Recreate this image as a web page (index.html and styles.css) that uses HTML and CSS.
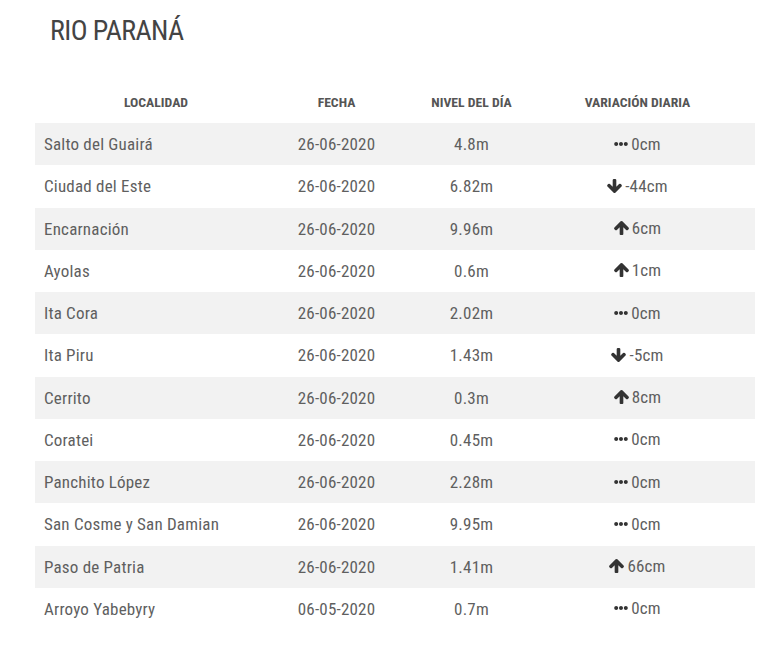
FILE: index.html
```html
<!DOCTYPE html>
<html lang="es">
<head>
<meta charset="utf-8">
<title>Rio Paraná</title>
<link rel="stylesheet" href="styles.css">
</head>
<body>
<svg width="0" height="0" class="defs">
  <defs>
    <symbol id="up" viewBox="53 192 1558 1472"><path d="M1611 971q0 51-37 90l-75 75q-38 38-91 38-54 0-90-38l-294-293v704q0 52-37.5 84.5t-90.5 32.5h-128q-53 0-90.5-32.5t-37.5-84.5v-704l-294 293q-36 38-90 38t-90-38l-75-75q-38-38-38-90 0-53 38-91l651-651q35-37 90-37 54 0 91 37l651 651q37 39 37 91z"/></symbol>
    <symbol id="down" viewBox="53 128 1558 1483"><path d="M1611 832q0 53-37 90l-651 652q-39 37-91 37-53 0-90-37l-651-652q-38-36-38-90 0-53 38-91l74-75q39-37 91-37 53 0 90 37l294 294v-704q0-52 38-90t90-38h128q52 0 90 38t38 90v704l294-294q37-37 90-37 52 0 91 37l75 75q37 39 37 91z"/></symbol>
    <symbol id="dots" viewBox="0 0 512 512"><path d="M328 256c0 39.8-32.2 72-72 72s-72-32.2-72-72 32.2-72 72-72 72 32.2 72 72zm104-72c-39.8 0-72 32.2-72 72s32.2 72 72 72 72-32.2 72-72-32.2-72-72-72zm-352 0c-39.8 0-72 32.2-72 72s32.2 72 72 72 72-32.2 72-72-32.2-72-72-72z"/></symbol>
  </defs>
</svg>
<main class="page">
  <h1 class="title">RIO PARANÁ</h1>
  <table class="levels">
    <colgroup>
      <col class="c-loc"><col class="c-date"><col class="c-level"><col class="c-var"><col class="c-pad">
    </colgroup>
    <thead>
      <tr><th>LOCALIDAD</th><th>FECHA</th><th>NIVEL DEL DÍA</th><th>VARIACIÓN DIARIA</th><th></th></tr>
    </thead>
    <tbody>
      <tr><td class="loc">Salto del Guairá</td><td>26-06-2020</td><td>4.8m</td><td><span class="var"><svg class="ico dots"><use href="#dots"/></svg>0cm</span></td><td></td></tr>
      <tr><td class="loc">Ciudad del Este</td><td>26-06-2020</td><td>6.82m</td><td><span class="var"><svg class="ico arrow"><use href="#down"/></svg>-44cm</span></td><td></td></tr>
      <tr><td class="loc">Encarnación</td><td>26-06-2020</td><td>9.96m</td><td><span class="var"><svg class="ico arrow"><use href="#up"/></svg>6cm</span></td><td></td></tr>
      <tr><td class="loc">Ayolas</td><td>26-06-2020</td><td>0.6m</td><td><span class="var"><svg class="ico arrow"><use href="#up"/></svg>1cm</span></td><td></td></tr>
      <tr><td class="loc">Ita Cora</td><td>26-06-2020</td><td>2.02m</td><td><span class="var"><svg class="ico dots"><use href="#dots"/></svg>0cm</span></td><td></td></tr>
      <tr><td class="loc">Ita Piru</td><td>26-06-2020</td><td>1.43m</td><td><span class="var"><svg class="ico arrow"><use href="#down"/></svg>-5cm</span></td><td></td></tr>
      <tr><td class="loc">Cerrito</td><td>26-06-2020</td><td>0.3m</td><td><span class="var"><svg class="ico arrow"><use href="#up"/></svg>8cm</span></td><td></td></tr>
      <tr><td class="loc">Coratei</td><td>26-06-2020</td><td>0.45m</td><td><span class="var"><svg class="ico dots"><use href="#dots"/></svg>0cm</span></td><td></td></tr>
      <tr><td class="loc">Panchito López</td><td>26-06-2020</td><td>2.28m</td><td><span class="var"><svg class="ico dots"><use href="#dots"/></svg>0cm</span></td><td></td></tr>
      <tr><td class="loc">San Cosme y San Damian</td><td>26-06-2020</td><td>9.95m</td><td><span class="var"><svg class="ico dots"><use href="#dots"/></svg>0cm</span></td><td></td></tr>
      <tr><td class="loc">Paso de Patria</td><td>26-06-2020</td><td>1.41m</td><td><span class="var"><svg class="ico arrow"><use href="#up"/></svg>66cm</span></td><td></td></tr>
      <tr><td class="loc">Arroyo Yabebyry</td><td>06-05-2020</td><td>0.7m</td><td><span class="var"><svg class="ico dots"><use href="#dots"/></svg>0cm</span></td><td></td></tr>
    </tbody>
  </table>
</main>
</body>
</html>
```

FILE: styles.css
```css
* { box-sizing: border-box; }
html, body { margin: 0; padding: 0; background: #fff; }
body {
  font-family: Roboto, "Noto Sans", sans-serif;
  font-stretch: 75%;
  color: #5f5f5f;
}
.defs { position: absolute; width: 0; height: 0; overflow: hidden; }
.page { padding: 14px 15px 0 35px; }
.title {
  margin: 0 0 32px 15px;
  font-size: 28px;
  line-height: 34px;
  font-weight: 400;
  color: #444;
  letter-spacing: -0.6px;
}
.levels {
  width: 720px;
  border-collapse: collapse;
  table-layout: fixed;
}
.c-loc { width: 242px; }
.c-date { width: 119px; }
.c-level { width: 151px; }
.c-var { width: 181px; }
.c-pad { width: 27px; }
.levels th {
  height: 43px;
  font-size: 13.7px;
  font-weight: 700;
  color: #555;
  text-align: center;
  padding: 0;
}
.levels td {
  height: 42.25px;
  padding: 0;
  font-size: 17px;
  letter-spacing: 0.2px;
  text-align: center;
  color: #5f5f5f;
}
.levels td.loc { text-align: left; padding-left: 9px; }
.levels tbody tr:nth-child(odd) { background: #f2f2f2; }
.var { display: inline-flex; align-items: center; gap: 3px; }
.ico { fill: #333; }
.ico.arrow { width: 15px; height: 14px; }
.ico.dots { width: 14px; height: 14px; }
```
